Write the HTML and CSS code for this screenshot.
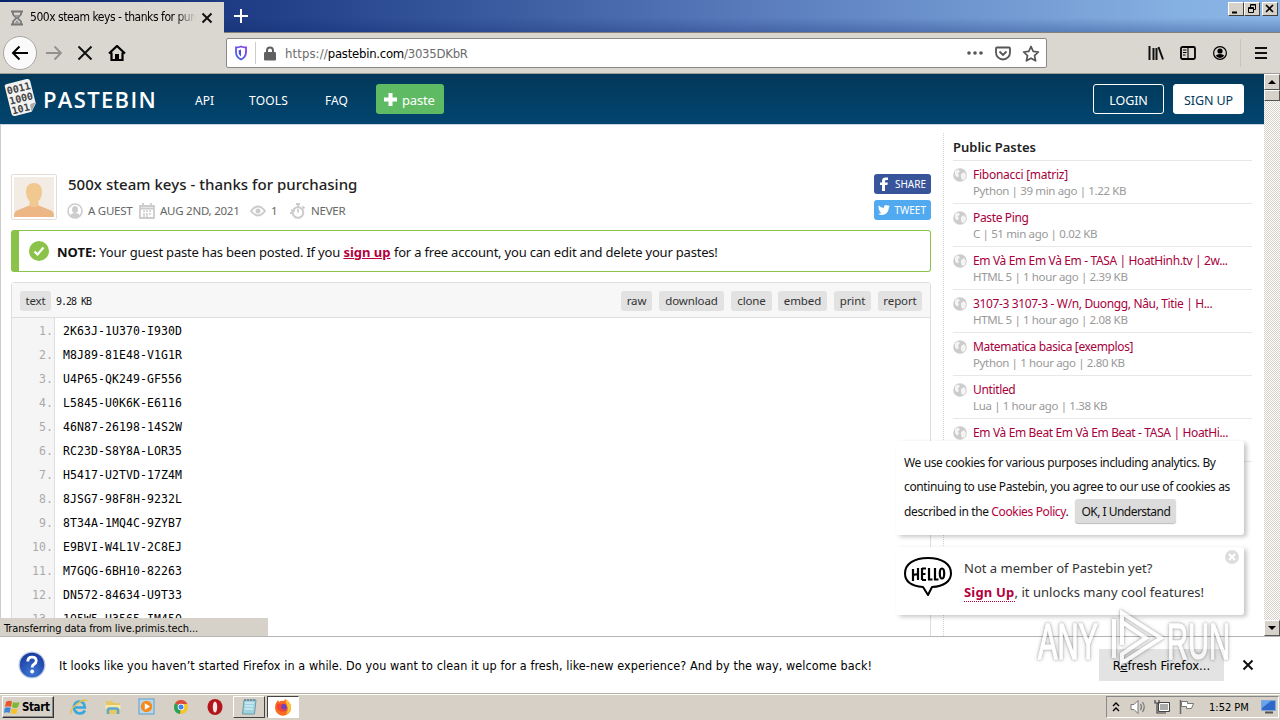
FILE: index.html
```html
<!DOCTYPE html>
<html lang="en">
<head>
<meta charset="utf-8">
<title>500x steam keys - thanks for purchasing</title>
<link rel="stylesheet" href="styles.css">
</head>
<body>
<div class="screen">
  <div class="titlebar">
    <div class="tab">
      <svg class="tab-icon" width="14" height="16" viewBox="0 0 14 16"><path d="M1 1.500h12M1 14.500h12M3 2v2.500L6.300 8 3 11.500V14M11 2v2.500L7.700 8l3.300 3.500V14" fill="none" stroke="#777" stroke-width="1.800"/><path d="M4 5h6L7 8zM4 14l3-4 3 4z" fill="#999"/></svg>
      <span class="tab-title">500x steam keys - thanks for purchasing</span>
      <svg width="12" height="12" viewBox="0 0 12 12"><path d="M1.500 1.500l9 9m0-9l-9 9" stroke="#111" stroke-width="2"/></svg>
    </div>
    <svg class="newtab" width="14" height="14" viewBox="0 0 14 14"><path d="M7 0v14M0 7h14" stroke="#fff" stroke-width="2"/></svg>
    <div class="winbtns">
      <span class="winbtn"><svg width="14" height="12"><path d="M3 9.500h5" stroke="#000" stroke-width="2"/></svg></span>
      <span class="winbtn"><svg width="14" height="12"><path d="M5.500 4V1.500h5v5H9M5 2h6M3.500 4.500h5v5h-5zM3 5.500h6" fill="none" stroke="#000"/></svg></span>
      <span class="winbtn close"><svg width="13" height="12"><path d="M3 2l7 7m0-7l-7 7" stroke="#000" stroke-width="1.600"/></svg></span>
    </div>
  </div>

  <div class="toolbar">
    <span class="back"><svg width="18" height="16" viewBox="0 0 18 16"><path d="M17 8H2M8.500 1.500L2 8l6.500 6.500" fill="none" stroke="#000" stroke-width="2"/></svg></span>
    <svg class="fwd" width="18" height="16" viewBox="0 0 18 16"><path d="M1 8h15M9.500 1.500L16 8l-6.500 6.500" fill="none" stroke="#919191" stroke-width="1.800"/></svg>
    <svg class="stop" width="16" height="16" viewBox="0 0 16 16"><path d="M1.500 1.500l13 13m0-13l-13 13" stroke="#111" stroke-width="2"/></svg>
    <svg class="home" width="18" height="16" viewBox="0 0 18 16"><path d="M1 8.500L9 1l8 7.500M3.500 7.500V15h11V7.500" fill="none" stroke="#000" stroke-width="2.200"/><path d="M7 9h4v6H7z"/></svg>
    <div class="urlbar">
      <svg class="shield" width="14" height="16" viewBox="0 0 14 16"><defs><linearGradient id="sh" x1="0" x2="1" y1="1" y2="0"><stop offset="0" stop-color="#3a6be8"/><stop offset="1" stop-color="#8a3ce8"/></linearGradient></defs><path d="M7 1.500c2 .9 3.500 1 5 1V7c0 3.500-1.500 5.800-5 7.500C3.500 12.800 2 10.500 2 7V2.500c1.500 0 3-.1 5-1z" fill="none" stroke="url(#sh)" stroke-width="1.800"/><path d="M7 4.500v7C5.300 10.300 4.700 9 4.700 7V5.200c.9 0 1.600-.3 2.300-.7z" fill="#5050e0"/></svg>
      <span class="sep"></span>
      <svg class="lock" width="12" height="15" viewBox="0 0 12 15"><path d="M3 7V4.500a3 3 0 016 0V7" fill="none" stroke="#606060" stroke-width="2"/><rect y="6" width="12" height="8.500" rx="1.200" fill="#606060"/></svg>
      <span class="url"><span class="scheme">https://</span><b>pastebin.com</b>/3035DKbR</span>
      <svg class="dots" width="16" height="4" fill="#555"><circle cx="2" cy="2" r="1.800"/><circle cx="8" cy="2" r="1.800"/><circle cx="14" cy="2" r="1.800"/></svg>
      <svg class="pocket" width="18" height="15" viewBox="0 0 18 15"><path d="M3 1.500h12q1 0 1 1V6.500a7 7 0 01-14 0V2.500q0-1 1-1z" fill="none" stroke="#555" stroke-width="1.800"/><path d="M5.500 5.500L9 9l3.500-3.500" fill="none" stroke="#555" stroke-width="1.800"/></svg>
      <svg class="star" width="18" height="17" viewBox="0 0 18 17"><path d="M9 1.500l2.200 4.900 5.200.6-3.900 3.600 1.100 5.200L9 13.200l-4.600 2.600 1.100-5.200L1.600 7l5.200-.6z" fill="none" stroke="#555" stroke-width="1.700" stroke-linejoin="round"/></svg>
    </div>
    <div class="tools">
      <svg width="16" height="14" viewBox="0 0 16 14"><path d="M1.500 0v14M5.500 2v12M8.500 2v12M10.500 1l4.500 12.500" stroke="#111" stroke-width="2"/></svg>
      <svg width="16" height="14" viewBox="0 0 16 14"><rect x="1" y="1" width="14" height="12" rx="1.500" fill="none" stroke="#000" stroke-width="1.800"/><path d="M8 1v12M3 4h3.500M3 6.500h3.500M3 9h2.500" stroke="#000" stroke-width="1.100"/></svg>
      <svg width="16" height="16" viewBox="0 0 16 16"><circle cx="8" cy="8" r="6.400" fill="none" stroke="#000" stroke-width="1.200"/><circle cx="8" cy="6" r="2.600"/><path d="M3.800 10.500q1.500-1.500 4.200-1.500t4.200 1.500Q11.300 12.900 8 12.900T3.800 10.500z"/></svg>
      <span class="toolsep"></span>
      <svg width="12" height="12"><path d="M0 1h12M0 6h12M0 11h12" stroke="#111" stroke-width="2"/></svg>
    </div>
  </div>

  <div class="viewport">
    <div class="page">
      <header class="site">
        <svg class="logo" width="37" height="42" viewBox="0 0 37 42"><g transform="rotate(-14 19 21)"><path d="M8 4h21q3 0 3 3v23l-6 7H9q-3 0-3-3V6q0-2 2-2z" fill="#f2f2f2"/><path d="M32 29l-6 8v-5q0-3 2-3z" fill="#aaa"/><g class="logo-digits"><text x="7" y="14.500">0011</text><text x="7" y="25">1000</text><text x="7" y="35">101</text></g></g></svg>
        <span class="brand">PASTEBIN</span>
        <nav class="nav"><a class="n1">API</a><a class="n2">TOOLS</a><a class="n3">FAQ</a></nav>
        <a class="newpaste"><svg width="13" height="13"><path d="M6.500 0v13M0 6.500h13" stroke="#fff" stroke-width="4"/></svg><span>paste</span></a>
        <a class="login">LOGIN</a><a class="signup">SIGN UP</a>
      </header>
      <div class="columns">
        <main class="main">
          <div class="info">
            <div class="avatar"><svg width="40" height="40" viewBox="0 0 40 40"><rect width="40" height="40" fill="#f3ece4"/><path d="M20 6c5.500 0 8 3.500 8 9 0 4-1.500 7-3.500 9v4.500L38 34q2 2 2 6H0q0-4 2-6l13.500-5.500V24C13.500 22 12 19 12 15c0-5.500 2.500-9 8-9z" fill="#f0c890"/><path d="M15.500 28.500L2 34q-2 2-2 6h40q0-4-2-6l-13.500-5.500q-4.500 3-9 0z" fill="#ecb784"/></svg></div>
            <div class="info-text">
              <h1>500x steam keys - thanks for purchasing</h1>
              <div class="meta">
                <svg class="m1" width="16" height="16"><circle cx="8" cy="8" r="7" fill="none" stroke="#ccc" stroke-width="1.600"/><ellipse cx="8" cy="6.500" rx="3" ry="3.500" fill="#ccc"/><path d="M3 13q1-3 5-3t5 3q-2 2-5 2t-5-2z" fill="#ccc"/></svg><span class="t1">A GUEST</span>
                <svg class="m2" width="16" height="16"><path d="M1 3h14v12H1zM4 0v4M12 0v4M1 5.500h14" fill="none" stroke="#ccc" stroke-width="1.800"/><path d="M4 8h8M4 11h8M4 13h5" stroke="#ccc" stroke-width="1.500" stroke-dasharray="2 1"/></svg><span class="t2">AUG 2ND, 2021</span>
                <svg class="m3" width="16" height="12"><path d="M1 6q7-9 14 0-7 9-14 0z" fill="none" stroke="#ccc" stroke-width="2"/><circle cx="8" cy="6" r="2.500" fill="#ccc"/></svg><span class="t3">1</span>
                <svg class="m4" width="16" height="16"><circle cx="8" cy="9.500" r="5.300" fill="none" stroke="#ccc" stroke-width="2"/><path d="M8 9.500V6M6 1h4M8 1v3M12.500 3.500l2 2M1 7.500h4M0 10h3" stroke="#ccc" stroke-width="1.800"/></svg><span class="t4">NEVER</span>
              </div>
            </div>
            <div class="social">
              <a class="fb"><svg width="10" height="14" viewBox="0 0 10 14"><path d="M3 14V8H1V5.500h2V4q0-3.500 3.500-3.500H9V3H7.200Q6 3 6 4.200v1.300h2.800L8.400 8H6v6z" fill="#fff"/></svg><span>SHARE</span></a>
              <a class="tw"><svg width="12" height="10" viewBox="0 0 12 10"><path d="M12 1.200l-1.200 1.400C10.800 7 8 10 4 10 2.500 10 1 9.600 0 8.800q2 .2 3.500-1-1.700-.2-2.200-1.700h1Q.5 5.300.4 3.500l1 .3Q-.2 2.200.8.500q2 2.400 5 2.500Q5.500.2 8.200 0q1 0 1.800.8L11.500.200l-.9 1.300z" fill="#fff"/></svg><span>TWEET</span></a>
            </div>
          </div>
          <div class="note">
            <svg width="20" height="20"><circle cx="10" cy="10" r="10" fill="#8bc34a"/><path d="M5.500 10.500l3 3 6-7" fill="none" stroke="#fff" stroke-width="2.200"/></svg>
            <p><b>NOTE:</b> <span>Your guest paste has been posted. If you</span> <a>sign up</a> <span>for a free account, you can edit and delete your pastes!</span></p>
          </div>
          <div class="code">
            <div class="codebar"><span class="btn b0">text</span><span class="size">9.28 KB</span>
              <span class="btn b1">raw</span><span class="btn b2">download</span><span class="btn b3">clone</span><span class="btn b4">embed</span><span class="btn b5">print</span><span class="btn b6">report</span></div>
            <ol class="lines">
              <li><i>1.</i>2K63J-1U370-I930D</li><li><i>2.</i>M8J89-81E48-V1G1R</li><li><i>3.</i>U4P65-QK249-GF556</li><li><i>4.</i>L5845-U0K6K-E6116</li><li><i>5.</i>46N87-26198-14S2W</li><li><i>6.</i>RC23D-S8Y8A-LOR35</li><li><i>7.</i>H5417-U2TVD-17Z4M</li><li><i>8.</i>8JSG7-98F8H-9232L</li><li><i>9.</i>8T34A-1MQ4C-9ZYB7</li><li><i>10.</i>E9BVI-W4L1V-2C8EJ</li><li><i>11.</i>M7GQG-6BH10-82263</li><li><i>12.</i>DN572-84634-U9T33</li><li><i>13.</i>1Q5W5-H3565-IM45Q</li>
            </ol>
          </div>
        </main>
        <aside class="side">
          <h2>Public Pastes</h2>
          <ul>
            <li><svg class="globe" width="14" height="14"><use href="#globe"/></svg><a>Fibonacci [matriz]</a><small>Python | 39 min ago | 1.22 KB</small></li>
            <li><svg class="globe" width="14" height="14"><use href="#globe"/></svg><a>Paste Ping</a><small>C | 51 min ago | 0.02 KB</small></li>
            <li><svg class="globe" width="14" height="14"><use href="#globe"/></svg><a>Em Và Em Em Và Em - TASA | HoatHinh.tv | 2w...</a><small>HTML 5 | 1 hour ago | 2.39 KB</small></li>
            <li><svg class="globe" width="14" height="14"><use href="#globe"/></svg><a>3107-3 3107-3 - W/n, Duongg, Nâu, Titie | H...</a><small>HTML 5 | 1 hour ago | 2.08 KB</small></li>
            <li><svg class="globe" width="14" height="14"><use href="#globe"/></svg><a>Matematica basica [exemplos]</a><small>Python | 1 hour ago | 2.80 KB</small></li>
            <li><svg class="globe" width="14" height="14"><use href="#globe"/></svg><a>Untitled</a><small>Lua | 1 hour ago | 1.38 KB</small></li>
            <li><svg class="globe" width="14" height="14"><use href="#globe"/></svg><a>Em Và Em Beat Em Và Em Beat - TASA | HoatHi...</a></li>
          </ul>
        </aside>
      </div>
    </div>
    <div class="scrollbar"><span class="sb-btn"><svg width="8" height="4"><path d="M0 4l4-4 4 4z"/></svg></span><span class="thumb"></span><span class="sb-btn down"><svg width="8" height="4"><path d="M0 0h8L4 4z"/></svg></span></div>

    <div class="pop cookies">
      <p>We use cookies for various purposes including analytics. By<br>continuing to use Pastebin, you agree to our use of cookies as<br>described in the <a>Cookies Policy</a>.<span class="ok">OK, I Understand</span></p>
    </div>
    <div class="pop hello">
      <svg width="50" height="42" viewBox="0 0 50 42"><path d="M20 31C8 30 2 25 2 17.500 2 8 11 2 25 2s23 6 23 15.500C48 25 41 30.500 29 31l-4 8z" fill="#fff" stroke="#000" stroke-width="2" stroke-linejoin="round"/><path d="M10 13v12M15 12v12M10 19l5-1M19 12v12M19 12.500h4M19 18h3.500M19 24h4M26 12v11.500h3.500M32 12v11.500h3.500" fill="none" stroke="#000" stroke-width="2.200"/><ellipse cx="39" cy="17.500" rx="2.200" ry="5" fill="none" stroke="#000" stroke-width="2.200"/></svg>
      <p>Not a member of Pastebin yet?<br><a>Sign Up</a><span class="cool">, it unlocks many cool features!</span></p>
      <svg class="dismiss" width="14" height="14"><circle cx="7" cy="7" r="7" fill="#ddd"/><path d="M4 4l6 6m0-6l-6 6" stroke="#fff" stroke-width="2"/></svg>
    </div>
    <div class="status">Transferring data from live.primis.tech...</div>
  </div>

  <div class="notify">
    <svg width="28" height="28" viewBox="0 0 28 28"><defs><radialGradient id="q" cx=".5" cy=".8" r=".8"><stop offset="0" stop-color="#3f78d8"/><stop offset="1" stop-color="#16399c"/></radialGradient></defs><circle cx="14" cy="14" r="13.500" fill="#b9c8e4"/><circle cx="14" cy="14" r="12.200" fill="url(#q)"/><path d="M9.800 10.500q0-4.300 4.200-4.300t4.200 3.800q0 2-2.200 3.300-1.800 1.100-1.800 3.200" fill="none" stroke="#fff" stroke-width="2.800"/><circle cx="14.200" cy="20.500" r="1.900" fill="#fff"/></svg>
    <span class="msg">It looks like you haven’t started Firefox in a while. Do you want to clean it up for a fresh, like-new experience? And by the way, welcome back!</span>
    <span class="refresh"><span>R<u>e</u>fresh Firefox...</span></span>
    <svg class="nclose" width="12" height="12"><path d="M1.500 1.500l9 9m0-9l-9 9" stroke="#111" stroke-width="2"/></svg>
  </div>

  <div class="taskbar">
    <span class="start"><svg width="17" height="16" viewBox="0 0 17 16"><path d="M2 3q3-2 6-.5L7 8Q4 6.500 1 8z" fill="#e8562a"/><path d="M9 3q3 1.500 6.500 0L14 8.300q-3 1.500-6 0z" fill="#7cb832"/><path d="M.8 9Q4 7.500 6.800 9L5.500 14Q3 12.500 0 14z" fill="#3c87d8"/><path d="M7.800 9.300q3 1.500 6 0l-1.300 5q-3 1.500-6 0z" fill="#f6c12c"/></svg><b>Start</b></span>
    <div class="quick">
      <svg width="18" height="18" viewBox="0 0 18 18"><path d="M15 12.500A6 6 0 119 3.500q5.500 0 5.800 6H4.500" fill="none" stroke="#38a8dc" stroke-width="2.600"/><path d="M1 16Q-1 12 7 6T17 3" fill="none" stroke="#e8c048" stroke-width="1.500"/></svg>
      <svg width="18" height="18" viewBox="0 0 18 18"><path d="M2 3h6l1.500 2H16v11H2z" fill="#e5c766"/><path d="M1.500 7h15v4h-15z" fill="#f9e8a6"/><path d="M4 16v-4q0-1.500 1.500-1.500h7Q14 10.500 14 12v4" fill="none" stroke="#58a9d8" stroke-width="2.400"/></svg>
      <svg width="18" height="18" viewBox="0 0 18 18"><rect x="1" y="1" width="15" height="15" fill="#b8d8ee" stroke="#5a9fcb"/><circle cx="8.500" cy="8.500" r="5.700" fill="#f58b1f"/><path d="M6.800 5.300l5.200 3.200-5.200 3.200z" fill="#fff"/></svg>
      <svg width="18" height="18" viewBox="0 0 18 18"><circle cx="9" cy="9" r="7" fill="#f7c52b"/><path d="M9 9L3 5.300Q5.500 2 9 2q4.400 0 6.300 4H9z" fill="#dd4b3e"/><path d="M3 5.300L9 9l-1 7Q2 15 2 9q0-2 1-3.700z" fill="#2ba05a"/><circle cx="9" cy="9" r="3.300" fill="#fff"/><circle cx="9" cy="9" r="2.500" fill="#4285e8"/></svg>
      <svg width="18" height="18" viewBox="0 0 18 18"><ellipse cx="9" cy="9" rx="7.500" ry="8" fill="#b3151b"/><ellipse cx="9" cy="9" rx="2.200" ry="5.500" fill="#f4e8e6"/></svg>
    </div>
    <span class="task"><svg width="18" height="18" viewBox="0 0 18 18"><path d="M4 2h12l-1.500 14h-12z" fill="#9fd2de" stroke="#6a9eab"/><path d="M5 5h9M5 8h8.500M4.600 11h8.500" stroke="#e8fbff"/><path d="M5 1v2M8 1v2M11 1v2M14 1v2" stroke="#667"/></svg></span>
    <span class="task active"><svg width="18" height="18" viewBox="0 0 18 18"><path d="M2 5l2-3 1 2q2-2 5-1l1-2q6 3 6 8.500A8 8 0 011 10q0-3 1-5z" fill="#fa6a22"/><path d="M11 1q6 3 6 8.500-.5 5-5 7 3-5 1-9z" fill="#fcc42c"/><circle cx="9" cy="9.500" r="3.800" fill="#6b42c8"/><path d="M3 6q4-1 6 1-2 0-2 2 1 3 5 2-3 4-7 1.500Q2 10 3 6z" fill="#f5432f"/></svg></span>
    <div class="tray">
      <svg class="chev" width="8" height="10"><path d="M1 4l3-3 3 3M1 9l3-3 3 3" fill="none" stroke="#000" stroke-width="1.400"/></svg>
      <svg class="vol" width="17" height="16"><path d="M1 5.500h3l4-4v13l-4-4H1z" fill="#fff" stroke="#777"/><path d="M10.500 5q2 3 0 6M12.500 3q3.500 5 0 10" fill="none" stroke="#777" stroke-width="1.200"/></svg>
      <svg class="net" width="17" height="16"><path d="M4.500 3.500h11v9h-11z" fill="#aaa" stroke="#444"/><path d="M5.500 4.500h9v7h-9z" fill="none" stroke="#fff"/><path d="M1 1v3h4V1M3 4v10h9" fill="none" stroke="#444" stroke-width="1.200"/></svg>
      <svg class="flag" width="17" height="16"><path d="M2.500 1v14" stroke="#666" stroke-width="1.500"/><path d="M3.500 2.500h6v2h6l-2 5h-5v-2h-5z" fill="#fff" stroke="#777"/></svg>
      <span class="clock">1:52 PM</span>
      <svg class="desk" width="16" height="14"><rect x=".5" y=".5" width="14" height="10" fill="#2e68c8" stroke="#7fa8d8"/><path d="M1 1h9L1 8z" fill="#68a4ec"/><path d="M4 12.500h8" stroke="#555" stroke-width="2"/></svg>
    </div>
  </div>

  <svg class="watermark" width="200" height="66" viewBox="0 0 200 66"><g fill="#fff"><text x="2" y="52" textLength="60" lengthAdjust="spacingAndGlyphs">ANY</text><text x="131" y="52" textLength="63" lengthAdjust="spacingAndGlyphs">RUN</text></g><path d="M78 51V12M86 38V6l39 25-39 25v-9l24-16-24-16" fill="none" stroke="#fff" stroke-width="4"/></svg>
</div>
<svg width="0" height="0" class="defs"><symbol id="globe" viewBox="0 0 14 14"><circle cx="7" cy="7" r="6.800" fill="#ccc"/><path d="M2 3l3-1.500L7 3 5 5.500 6 8l-2 1.500L2 7zM8 6l3-2 2 3-1 4-3 1-1-3z" fill="#f4f4f4"/></symbol></svg>
</body>
</html>
```
FILE: styles.css
```css
* { box-sizing: border-box; }
body { margin: 0; background: #fff; font-family: "Noto Sans", sans-serif; font-size: 12px; color: #222; }
svg { display: block; flex: none; }
.defs { position: absolute; }
.screen { position: relative; width: 1280px; height: 720px; overflow: hidden; display: flex; flex-direction: column; white-space: nowrap; }

/* browser chrome */
.titlebar, .urlbar, .status, .notify, .taskbar { font-family: "DejaVu Sans Condensed", "DejaVu Sans", sans-serif; color: #000; }
.titlebar { height: 33px; flex: none; display: flex; align-items: flex-start; border-bottom: 1px solid #828078; background: linear-gradient(180deg, rgba(10,36,106,0) 55%, rgba(10,36,106,.28)), linear-gradient(90deg, #0a246a, #26458d 25%, #5b7dbd 60%, #85b0e2 92%, #8ab5e6); }
.tab { margin-top: 2px; width: 224px; height: 31px; background: #dad7d1; display: flex; align-items: center; padding-left: 10px; }
.tab-title { width: 166px; overflow: hidden; margin: -2px 5px 0 6px; font-size: 12px; letter-spacing: -.46px; -webkit-mask-image: linear-gradient(90deg, #000 88%, transparent); mask-image: linear-gradient(90deg, #000 88%, transparent); }
.newtab { margin: 9px 0 0 10px; }
.winbtns { margin-left: auto; display: flex; padding: 2px 2px 0 0; }
.winbtn { width: 16px; height: 14px; background: #d6d2ca; border: 1px solid; border-color: #fff #404040 #404040 #fff; }
.winbtn.close { margin-left: 2px; }
.toolbar { height: 41px; flex: none; background: #dad7d1; display: flex; align-items: center; padding: 0 13px 0 3px; border-bottom: 1px solid #a09d96; }
.back { width: 34px; height: 34px; border-radius: 50%; background: #fafafa; border: 1px solid #a9a7a2; display: flex; align-items: center; justify-content: center; }
.fwd { margin-left: 8px; } .stop { margin-left: 14px; } .home { margin-left: 15px; }
.urlbar { margin-left: 100px; width: 821px; height: 30px; background: #fff; border: 1px solid #8b8983; border-radius: 2px; display: flex; align-items: center; padding: 0 6px 0 7px; }
.sep { width: 1px; height: 22px; background: #ccc; margin: 0 8px 0 7px; }
.url { margin-left: 9px; font-size: 13px; color: #6b6b6b; letter-spacing: -.25px; }
.scheme { letter-spacing: .1px; }
.url b { font-weight: 400; color: #000; }
.dots { margin-left: auto; } .pocket { margin: 0 10px 0 11px; }
.tools { margin-left: auto; display: flex; align-items: center; gap: 16px; }
.toolsep { width: 1px; height: 28px; background: #c8c5be; margin: 0 -2px 0 -4px; }

/* web page */
.viewport { position: relative; height: 562px; flex: none; display: flex; overflow: hidden; }
.page { width: 1264px; height: 562px; overflow: hidden; }
.site { height: 51px; background: linear-gradient(#023859, #02456f); border-bottom: 1px solid #c5d2df; display: flex; align-items: center; color: #fff; font-size: 13px; padding: 0 20px 0 2px; }
.logo { margin-top: -3px; }
.brand { margin-left: 4px; width: 115px; font-family: "Open Sans", sans-serif; font-weight: 600; font-size: 22px; letter-spacing: 1.35px; }
.logo-digits { font: bold 10px "DejaVu Sans Mono", monospace; fill: #444; }
.nav { display: flex; width: 218px; font-size: 12px; padding: 2px 0 0 37px; }
.n1 { width: 54px; } .n2 { width: 76px; } .n2 { letter-spacing: .2px; }
.newpaste { width: 68px; height: 30px; background: #5fbb63; border-radius: 3px; display: flex; align-items: center; padding-left: 8px; gap: 5px; letter-spacing: -.2px; }
.newpaste span { margin-top: 1px; }
.login, .signup { width: 71px; height: 30px; border: 1px solid #fff; border-radius: 3px; line-height: 32px; text-align: center; font-size: 12.500px; letter-spacing: -.1px; }
.login { margin-left: auto; } .signup { margin-left: 9px; background: #fff; color: #02395b; }
.columns { display: flex; height: 511px; border-left: 1px solid #ccc; }
.main { width: 920px; margin-left: 10px; }
.info { height: 46px; margin-top: 49px; display: flex; }
.avatar { width: 46px; height: 46px; padding: 2px; border: 1px solid #e4ddd7; border-radius: 2px; }
.info-text { flex: 1; padding-left: 10px; }
h1 { margin: 0 0 0 1px; font-size: 15px; line-height: 21px; height: 29px; font-weight: 500; color: #222; letter-spacing: .03px; }
.meta { display: flex; align-items: center; height: 16px; font-size: 11.500px; color: #666; }
.meta span { margin-top: -2px; }
.meta svg { margin-right: 5px; } .t1 { width: 51px; } .t2 { width: 90px; } .t3 { width: 19px; }
.t1, .t2, .t4 { letter-spacing: -.25px; }
.social { display: flex; flex-direction: column; gap: 6px; }
.social a { width: 57px; height: 20px; border-radius: 3px; color: #fff; font-size: 10px; display: flex; align-items: center; justify-content: space-between; padding: 0 5px; }
.fb { background: #38559b; } .tw { background: #51aaf0; }
.social .tw { padding-left: 4px; }
.note { margin-top: 10px; height: 42px; border: 1px solid #8bc34a; border-left-width: 8px; border-radius: 3px; display: flex; align-items: center; padding-left: 10px; font-size: 13px; }
.note p { margin: 2px 0 0 8px; color: #111; }
.note span { letter-spacing: -.2px; }
.note a { color: #b4003c; font-weight: 700; text-decoration: underline; }
.code { margin-top: 10px; height: 400px; border: 1px solid #ddd; border-radius: 3px; }
.codebar { height: 35px; background: #f7f7f7; border-bottom: 1px solid #ddd; display: flex; align-items: center; padding: 2px 8px 0; }
.btn { height: 20px; line-height: 20px; text-align: center; background: #e2e2e2; border-radius: 3px; color: #333; font-size: 11.500px; letter-spacing: -.1px; margin-left: 7px; }
.b0 { width: 31px; margin-left: 0; } .b1 { width: 31px; margin-left: auto; } .b2 { width: 65px; } .b3 { width: 41px; } .b4 { width: 49px; margin-left: 6px; } .b5 { width: 37px; } .b6 { width: 44px; }
.size { margin-left: 5px; font: 10px "DejaVu Sans Mono", monospace; letter-spacing: -1px; }
.lines { list-style: none; margin: 0; padding: 0; font: 11.500px/24px "DejaVu Sans Mono", monospace; color: #000; background: linear-gradient(90deg, #f5f5f5 42px, #ddd 42px, #ddd 43px, #fff 43px); }
.lines li { display: flex; height: 24px; letter-spacing: .08px; padding-top: 1px; }
.lines i { width: 43px; padding-right: 2px; margin-right: 8px; text-align: right; font-style: normal; color: #aaa; }
.side { margin-left: 12px; border-left: 1px dotted #d4d4d4; width: 309px; margin-top: 8px; padding-left: 9px; }
h2 { margin: 0; font-size: 13px; line-height: 28px; height: 28px; font-weight: 600; border-bottom: 1px solid #e6e6e6; }
.side ul { list-style: none; margin: 0; padding: 0; }
.side li { height: 43px; padding: 6px 0 0 20px; border-bottom: 1px solid #e8e8e8; position: relative; line-height: 16px; font-size: 12px; }
.side a, .side small { display: block; letter-spacing: -.36px; } .side a { color: #a8003c; } .side small { font-size: 11.500px; color: #999; }
.side li:first-child a { letter-spacing: -.27px; }
.globe { position: absolute; left: 0; top: 7px; }

.scrollbar { width: 16px; background: repeating-conic-gradient(#fff 0 25%, #d6d2ca 0 50%) 0 0 / 2px 2px; display: flex; flex-direction: column; }
.sb-btn, .thumb { width: 16px; height: 16px; background: #d6d2ca; border: 1px solid; border-color: #fff #555 #555 #fff; display: flex; align-items: center; justify-content: center; }
.thumb { height: 11px; } .down { margin-top: auto; }

.pop { position: absolute; left: 896px; width: 348px; background: #fff; border-radius: 3px; box-shadow: 3px 2px 4px rgba(0,0,0,.22); color: #111; }
.pop p { margin: 0; line-height: 24px; }
.cookies { top: 367px; height: 94px; padding: 10px 8px; font-size: 12px; letter-spacing: -.37px; }
.pop a { color: #b4003c; }
.ok { display: inline-block; width: 101px; height: 24px; line-height: 25px; text-align: center; background: #dcdcdc; border-radius: 3px; margin-left: 7px; box-shadow: 0 1px 1px #bbb; letter-spacing: -.52px; }
.hello { top: 473px; height: 68px; display: flex; padding: 9px 7px; font-size: 13px; }
.hello p { margin-left: 11px; color: #333; }
.hello a { font-weight: 700; border-bottom: 1px dotted #b4003c; letter-spacing: .2px; }
.cool { letter-spacing: .03px; }
.dismiss { position: absolute; right: 5px; top: 3px; }
.status { position: absolute; left: 0; bottom: 0; width: 268px; height: 18px; background: #d6d2ca; padding-left: 4px; line-height: 21px; font-size: 11px; letter-spacing: -.12px; }

.notify { height: 57px; flex: none; border-top: 1px solid #b5b5b5; display: flex; align-items: center; padding-left: 18px; font-size: 12.500px; }
.msg { margin-left: 13px; width: 1040px; letter-spacing: .08px; }
.refresh { width: 125px; height: 32px; background: #e3e3e3; display: flex; align-items: center; justify-content: center; font-size: 13px; flex: none; }
.nclose { margin-left: 18px; }
.taskbar { height: 27px; flex: none; background: #d6d0c7; border-top: 1px solid #b4b0a8; box-shadow: inset 0 1px #fff; display: flex; align-items: center; padding: 0 1px 0 2px; }
.start { width: 52px; height: 22px; border: 1px solid; border-color: #fff #333 #333 #fff; box-shadow: inset -1px -1px #888; display: flex; align-items: center; padding-left: 1px; gap: 1px; }
.start b { letter-spacing: -.4px; font-size: 11.500px; }
.quick { display: flex; gap: 16px; margin: 0 9px 0 16px; }
.task { width: 32px; height: 22px; border: 1px solid; border-color: #fff #444 #444 #fff; display: flex; align-items: center; justify-content: center; margin-right: 2px; }
.task.active { background: #fff; border-color: #444 #fff #fff #444; }
.tray { margin-left: auto; width: 173px; height: 22px; border: 1px solid; border-color: #888 #fff #fff #888; display: flex; align-items: center; padding-left: 5px; }
.vol { margin-left: 10px; } .net { margin-left: 7px; } .flag { margin-left: 7px; }
.clock { margin-left: 14px; width: 52px; font-size: 11px; }
.watermark { position: absolute; left: 1036px; top: 607px; font: 400 50px "Liberation Sans", sans-serif; overflow: visible; opacity: .7; filter: drop-shadow(0 0 1px rgba(0,0,0,.4)) drop-shadow(0 0 2px rgba(0,0,0,.3)); }
.watermark text { stroke: #fff; stroke-width: 1.5px; }
```
